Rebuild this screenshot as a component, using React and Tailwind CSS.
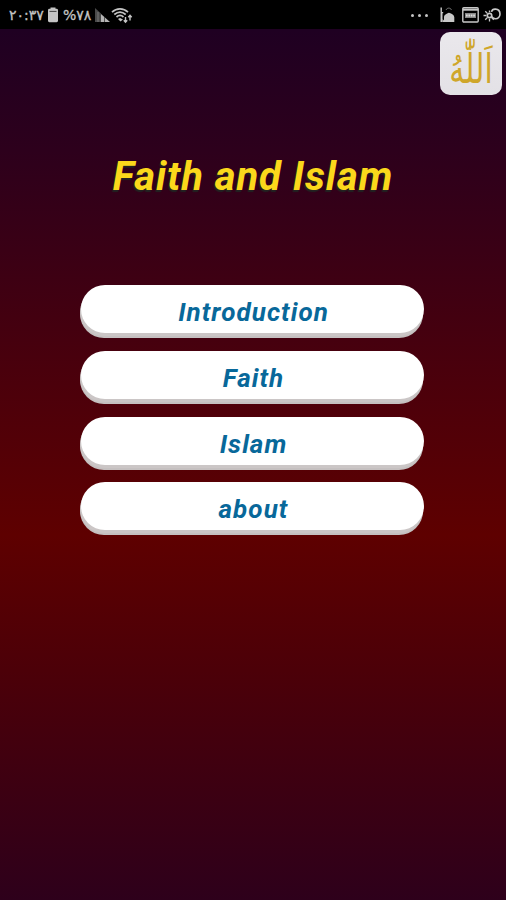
const items = [
  { id: "introduction", label: "Introduction" },
  { id: "faith", label: "Faith" },
  { id: "islam", label: "Islam" },
  { id: "about", label: "about" },
];

const BatteryIcon = () => (
  <svg width="12" height="16" viewBox="0 0 12 16" fill="#c4c4c4">
    <path d="M3.5 0.5h5v2h-5z" />
    <rect x="1" y="1.8" width="10" height="13.4" rx="1.4" />
    <path d="M2.5 4.4h7" stroke="#444" strokeWidth="1" />
  </svg>
);

const SignalIcon = () => (
  <svg width="17" height="16" viewBox="0 0 17 16">
    <path d="M1 1v14h6V6.5z" fill="#4a4a4a" />
    <path d="M4 5v10" stroke="#777" />
    <path d="M7 7l9 8H7z" fill="#b5b5b5" />
    <path d="M10.500 10v5" stroke="#555" />
  </svg>
);

const WifiIcon = () => (
  <svg width="22" height="17" viewBox="0 0 22 17" fill="none" stroke="#c4c4c4">
    <path d="M1 5.200C5.500 0.800 12.500 0.800 17 5.200" strokeWidth="1.700" />
    <path d="M3.300 7.500C7 4.300 11 4.300 14.700 7.500" strokeWidth="1.700" />
    <path d="M5.500 10C8 7.800 10 7.800 12.500 10" strokeWidth="1.700" />
    <path d="M7 12l2-1 3 1.500-2.500 2z" fill="#c4c4c4" stroke="none" />
    <path d="M14.500 10v5M12.800 13.300l1.700 1.900 1.700-1.900M19 13.500V8.500M17.300 10.300L19 8.300l1.700 2" strokeWidth="1.400" />
  </svg>
);

const MosqueIcon = () => (
  <svg width="15" height="16" viewBox="0 0 15 16" fill="#c8c8c8">
    <path d="M0.500 0.500h1.400V15H0.500zM1.700 5h1.500v1.200h-.7V15h-.8z" />
    <path d="M4 15V10.200C4 7.800 6.500 6.700 9 5.800c2.800 1 5.300 2.200 5.300 4.600V15z" />
    <path d="M6 3C7 0.500 10.500 0.500 11.500 3" fill="none" stroke="#777" strokeWidth="1" />
    <path d="M2.500 15v-3l3 3z" />
  </svg>
);

const CalendarIcon = () => (
  <svg width="17" height="16" viewBox="0 0 17 16" fill="none" stroke="#c8c8c8">
    <rect x="0.800" y="0.800" width="15.400" height="14.200" rx="1" strokeWidth="1.400" />
    <path d="M1 2.700h15" strokeWidth="2" />
    <path d="M3 8.500h11" stroke="#888" strokeWidth="5" />
    <path d="M4 8.500h9" stroke="#ddd" strokeWidth="2.200" strokeDasharray="1.700 .7" />
  </svg>
);

const BrightnessIcon = () => (
  <svg width="18" height="15" viewBox="0 0 18 15" fill="none" stroke="#c8c8c8">
    <path d="M8.500 3.800C9 1.500 11 1 12.500 1.100C15.500 1.300 17 3.500 17 6c0 2.800-2 5-4.700 4.800C10.500 10.700 9.300 10 8.500 8.500" strokeWidth="1.600" />
    <circle cx="6.500" cy="7.500" r="2.200" strokeWidth="1.700" />
    <path d="M6.500 4.300V2.500M6.500 10.800v2.700M3.300 7.500H0.500M4.200 5.200L2.300 3.300M4.200 9.800l-2 2M8.800 9.800l2 2" strokeWidth="1.300" />
  </svg>
);

const StatusBar = () => (
  <div className="flex h-[29px] items-start justify-between bg-black pl-[9px] pr-[5px] pt-[7px] text-[#c4c4c4]">
    <div className="flex h-4 items-center font-['DejaVu_Sans',sans-serif] text-[14px] [-webkit-text-stroke:0.3px_#c4c4c4]">
      <span className="w-[38px] whitespace-nowrap tracking-[-0.4px]">٢٠:٣٧</span>
      <BatteryIcon />
      <bdo dir="ltr" className="ml-1 w-[31px] whitespace-nowrap tracking-[-1.2px]">%٧٨</bdo>
      <SignalIcon />
      <WifiIcon />
    </div>
    <div className="flex h-4 items-center">
      <div className="mr-[12px] flex gap-[4px]">
        <i className="size-[3px] rounded-full bg-[#c4c4c4]" />
        <i className="size-[3px] rounded-full bg-[#c4c4c4]" />
        <i className="size-[3px] rounded-full bg-[#c4c4c4]" />
      </div>
      <MosqueIcon />
      <div className="ml-[7px] mr-[4px]">
        <CalendarIcon />
      </div>
      <BrightnessIcon />
    </div>
  </div>
);

const Logo = () => (
  <div className="mt-[3px] mr-1 ml-auto h-[63px] w-[62px] rounded-[10px] bg-linear-to-b from-[#eae8ec] to-[#e3e1e6]">
    <svg width="62" height="63" viewBox="0 0 62 63">
      <text
        x="0"
        y="0"
        textAnchor="middle"
        direction="rtl"
        transform="translate(31 51) scale(1 1.350)"
        fill="#cfa62a"
        className="font-['DejaVu_Sans',sans-serif] text-[30px]"
      >
        اَللّٰهُ
      </text>
    </svg>
  </div>
);

const MenuButton = ({ label }) => (
  <button className="h-[48px] w-full rounded-full bg-white pt-[6px] pl-[2px] text-[26px] leading-[42px] font-bold tracking-[1.050px] text-[#08689a] italic shadow-[-1px_3px_0_#cbc6c6,-1px_5px_0_#c5c0c0]">
    {label}
  </button>
);

export default function App() {
  return (
    <div className="h-[900px] w-[506px] overflow-hidden bg-[linear-gradient(to_bottom,#1f0022_30px,#2d001c_150px,#3a0015_250px,#4a000c_370px,#5e0000_535px,#4c0008_670px,#2e001b_900px)] font-[Roboto,sans-serif]">
      <StatusBar />
      <Logo />
      <h1 className="mt-[57px] text-center text-[40px] leading-[50px] font-bold tracking-[0.95px] text-[#fbd81b] italic [text-shadow:-1px_2px_1px_#222]">
        Faith and Islam
      </h1>
      <div className="mt-[83px] ml-[81px] flex w-[343px] flex-col gap-[17.800px]">
        {items.map((item) => (
          <MenuButton key={item.id} label={item.label} />
        ))}
      </div>
    </div>
  );
}
